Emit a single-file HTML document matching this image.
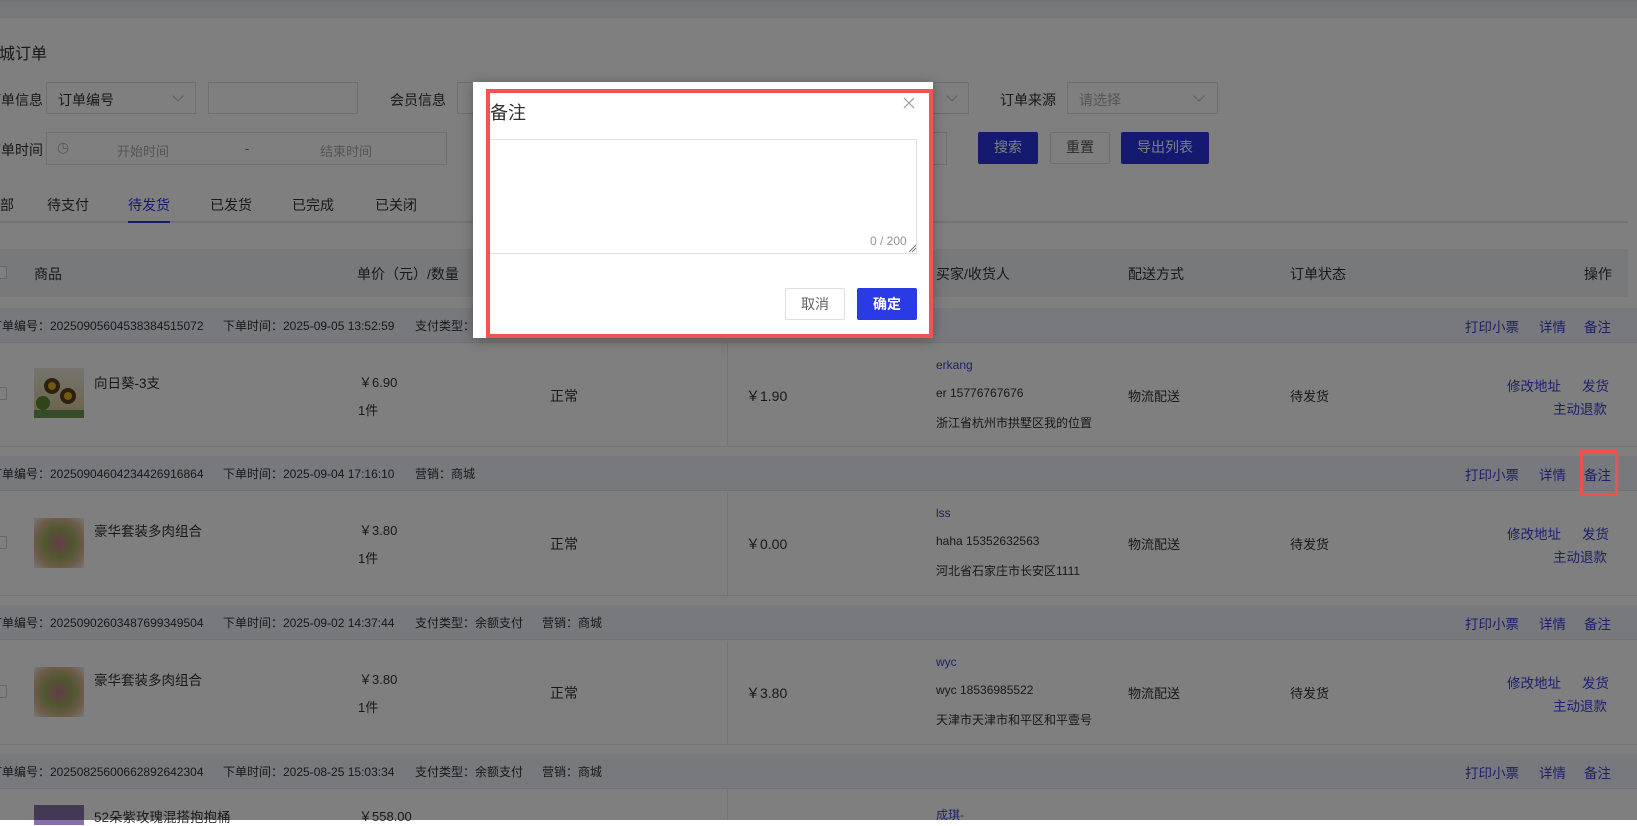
<!DOCTYPE html>
<html><head><meta charset="utf-8">
<style>
*{margin:0;padding:0;box-sizing:border-box}
body{width:1637px;height:820px;overflow:hidden;position:relative;background:#fff;font-family:"Liberation Sans","Noto Sans CJK SC",sans-serif;font-size:13px;color:#333}
.a{position:absolute;white-space:nowrap}
.topbar{left:0;top:0;width:1637px;height:18px;background:#eef0f3;border-top:2px solid #e4e6ea}
.box{position:absolute;border:1px solid #dcdfe6;background:#fff}
.ph{color:#aaa}
.btn{position:absolute;background:#2a35e0;color:#fff;text-align:center;line-height:31px;font-size:14px;border-radius:2px}
.btnw{position:absolute;background:#fff;border:1px solid #dcdfe6;color:#555;text-align:center;line-height:29px;font-size:14px;border-radius:2px}
.link{color:#3a40d8}
.ohead{position:absolute;left:0;width:1637px;height:35px;background:#f1f3f8;border-bottom:1px solid #e3e5ea;border-top:1px solid #eef0f4}
.prow{position:absolute;left:0;width:1637px;border-bottom:1px solid #e8e8e8}
.chk{position:absolute;left:-6px;width:13px;height:13px;border:1px solid #ccc;background:#fff;border-radius:2px}
.arr{position:absolute;width:8px;height:8px;border-right:1px solid #bbb;border-bottom:1px solid #bbb;transform:rotate(45deg)}
.overlay{position:absolute;left:0;top:0;width:1637px;height:820px;background:rgba(0,0,0,0.5)}
.oh{font-size:12px}
</style></head><body>
<div class="a topbar"></div>
<div class="a" style="left:-17px;top:40px;font-size:16px">商城订单</div>

<div class="a" style="left:-13px;top:90px;font-size:14px">订单信息</div>
<div class="box" style="left:46px;top:82px;width:150px;height:32px"><span class="a" style="left:11px;top:7px;font-size:14px">订单编号</span><div class="arr" style="left:127px;top:9px"></div></div>
<div class="box" style="left:208px;top:82px;width:150px;height:32px"></div>
<div class="a" style="left:390px;top:90px;font-size:14px">会员信息</div>
<div class="box" style="left:457px;top:82px;width:512px;height:32px"><div class="arr" style="left:490px;top:9px"></div></div>
<div class="a" style="left:1000px;top:90px;font-size:14px">订单来源</div>
<div class="box" style="left:1067px;top:82px;width:151px;height:32px"><span class="a ph" style="left:11px;top:7px;font-size:14px">请选择</span><div class="arr" style="left:127px;top:9px"></div></div>

<div class="a" style="left:-13px;top:140px;font-size:14px">下单时间</div>
<div class="box" style="left:46px;top:132px;width:401px;height:33px"><span class="a ph" style="left:10px;top:6px;font-size:14px">◷</span><span class="a ph" style="left:70px;top:8px;font-size:13px">开始时间</span><span class="a" style="left:198px;top:8px;color:#666">-</span><span class="a ph" style="left:273px;top:8px;font-size:13px">结束时间</span></div>
<div class="box" style="left:500px;top:132px;width:447px;height:33px"></div>
<div class="btn" style="left:978px;top:132px;width:60px;height:32px">搜索</div>
<div class="btnw" style="left:1050px;top:132px;width:60px;height:32px">重置</div>
<div class="btn" style="left:1121px;top:132px;width:88px;height:32px">导出列表</div>

<div class="a" style="left:-14px;top:195px;font-size:14px">全部</div>
<div class="a" style="left:47px;top:195px;font-size:14px">待支付</div>
<div class="a" style="left:128px;top:195px;font-size:14px;color:#2a35e0">待发货</div>
<div class="a" style="left:210px;top:195px;font-size:14px">已发货</div>
<div class="a" style="left:292px;top:195px;font-size:14px">已完成</div>
<div class="a" style="left:375px;top:195px;font-size:14px">已关闭</div>
<div class="a" style="left:0;top:221px;width:1628px;height:2px;background:#e4e6ea"></div>
<div class="a" style="left:128px;top:221px;width:42px;height:2px;background:#2a35e0"></div>

<div class="a" style="left:0;top:249px;width:1628px;height:48px;background:#f1f2f6"></div>
<div class="chk" style="top:266px"></div>
<div class="a" style="left:34px;top:264px;font-size:14px">商品</div>
<div class="a" style="left:357px;top:264px;font-size:14px">单价（元）/数量</div>
<div class="a" style="left:936px;top:264px;font-size:14px">买家/收货人</div>
<div class="a" style="left:1128px;top:264px;font-size:14px">配送方式</div>
<div class="a" style="left:1290px;top:264px;font-size:14px">订单状态</div>
<div class="a" style="left:1584px;top:264px;font-size:14px">操作</div>

<!-- order 1 -->
<div class="ohead" style="top:308px"></div>
<div class="a oh" style="left:-10px;top:317px">订单编号：20250905604538384515072</div>
<div class="a oh" style="left:223px;top:317px">下单时间：2025-09-05 13:52:59</div>
<div class="a oh" style="left:415px;top:317px">支付类型：余额支付</div>
<div class="a link" style="left:1465px;top:316px;font-size:13.5px">打印小票</div><div class="a link" style="left:1539px;top:316px;font-size:13.5px">详情</div><div class="a link" style="left:1584px;top:316px;font-size:13.5px">备注</div>
<div class="prow" style="top:343px;height:104px"></div>
<div class="a" style="left:727px;top:343px;width:1px;height:104px;background:#e8e8e8"></div>
<div class="chk" style="top:387px"></div>
<div class="a" style="left:34px;top:368px;width:50px;height:50px;background:linear-gradient(#eaeadc,#d8c890)"><div class="a" style="left:10px;top:10px;width:16px;height:16px;border-radius:50%;background:#e0b020;border:4px solid #5a4020"></div><div class="a" style="left:26px;top:20px;width:16px;height:16px;border-radius:50%;background:#e0b020;border:4px solid #5a4020"></div><div class="a" style="left:2px;top:28px;width:14px;height:14px;background:#5a8a30;border-radius:50%"></div><div class="a" style="left:0;top:42px;width:50px;height:8px;background:#6a9a50"></div></div>
<div class="a" style="left:94px;top:372px;font-size:13.5px">向日葵-3支</div>
<div class="a" style="left:359px;top:372px">￥6.90</div>
<div class="a" style="left:358px;top:400px">1件</div>
<div class="a" style="left:550px;top:386px;font-size:14px">正常</div>
<div class="a" style="left:746px;top:386px;font-size:14px">￥1.90</div>
<div class="a link" style="left:936px;top:358px;font-size:12px">erkang</div>
<div class="a" style="left:936px;top:386px;font-size:12px">er 15776767676</div>
<div class="a" style="left:936px;top:414px;font-size:12px">浙江省杭州市拱墅区我的位置</div>
<div class="a" style="left:1128px;top:386px">物流配送</div>
<div class="a" style="left:1290px;top:386px">待发货</div>
<div class="a link" style="left:1507px;top:375px;font-size:13.5px">修改地址</div><div class="a link" style="left:1582px;top:375px;font-size:13.5px">发货</div>
<div class="a link" style="left:1553px;top:398px;font-size:13.5px">主动退款</div>

<!-- order 2 -->
<div class="ohead" style="top:456px"></div>
<div class="a oh" style="left:-10px;top:465px">订单编号：20250904604234426916864</div>
<div class="a oh" style="left:223px;top:465px">下单时间：2025-09-04 17:16:10</div>
<div class="a oh" style="left:415px;top:465px">营销：商城</div>
<div class="a link" style="left:1465px;top:464px;font-size:13.5px">打印小票</div><div class="a link" style="left:1539px;top:464px;font-size:13.5px">详情</div><div class="a link" style="left:1584px;top:464px;font-size:13.5px">备注</div>
<div class="prow" style="top:492px;height:104px"></div>
<div class="a" style="left:727px;top:492px;width:1px;height:104px;background:#e8e8e8"></div>
<div class="chk" style="top:536px"></div>
<div class="a" style="left:34px;top:518px;width:50px;height:50px;background:radial-gradient(circle at 50% 50%,#c87890 0,#a0b060 40%,#d8b890 70%,#eee 100%)"></div>
<div class="a" style="left:94px;top:520px;font-size:13.5px">豪华套装多肉组合</div>
<div class="a" style="left:359px;top:520px">￥3.80</div>
<div class="a" style="left:358px;top:548px">1件</div>
<div class="a" style="left:550px;top:534px;font-size:14px">正常</div>
<div class="a" style="left:746px;top:534px;font-size:14px">￥0.00</div>
<div class="a link" style="left:936px;top:506px;font-size:12px">lss</div>
<div class="a" style="left:936px;top:534px;font-size:12px">haha 15352632563</div>
<div class="a" style="left:936px;top:562px;font-size:12px">河北省石家庄市长安区1111</div>
<div class="a" style="left:1128px;top:534px">物流配送</div>
<div class="a" style="left:1290px;top:534px">待发货</div>
<div class="a link" style="left:1507px;top:523px;font-size:13.5px">修改地址</div><div class="a link" style="left:1582px;top:523px;font-size:13.5px">发货</div>
<div class="a link" style="left:1553px;top:546px;font-size:13.5px">主动退款</div>

<!-- order 3 -->
<div class="ohead" style="top:605px"></div>
<div class="a oh" style="left:-10px;top:614px">订单编号：20250902603487699349504</div>
<div class="a oh" style="left:223px;top:614px">下单时间：2025-09-02 14:37:44</div>
<div class="a oh" style="left:415px;top:614px">支付类型：余额支付</div>
<div class="a oh" style="left:542px;top:614px">营销：商城</div>
<div class="a link" style="left:1465px;top:613px;font-size:13.5px">打印小票</div><div class="a link" style="left:1539px;top:613px;font-size:13.5px">详情</div><div class="a link" style="left:1584px;top:613px;font-size:13.5px">备注</div>
<div class="prow" style="top:641px;height:104px"></div>
<div class="a" style="left:727px;top:641px;width:1px;height:104px;background:#e8e8e8"></div>
<div class="chk" style="top:685px"></div>
<div class="a" style="left:34px;top:667px;width:50px;height:50px;background:radial-gradient(circle at 50% 50%,#c87890 0,#a0b060 40%,#d8b890 70%,#eee 100%)"></div>
<div class="a" style="left:94px;top:669px;font-size:13.5px">豪华套装多肉组合</div>
<div class="a" style="left:359px;top:669px">￥3.80</div>
<div class="a" style="left:358px;top:697px">1件</div>
<div class="a" style="left:550px;top:683px;font-size:14px">正常</div>
<div class="a" style="left:746px;top:683px;font-size:14px">￥3.80</div>
<div class="a link" style="left:936px;top:655px;font-size:12px">wyc</div>
<div class="a" style="left:936px;top:683px;font-size:12px">wyc 18536985522</div>
<div class="a" style="left:936px;top:711px;font-size:12px">天津市天津市和平区和平壹号</div>
<div class="a" style="left:1128px;top:683px">物流配送</div>
<div class="a" style="left:1290px;top:683px">待发货</div>
<div class="a link" style="left:1507px;top:672px;font-size:13.5px">修改地址</div><div class="a link" style="left:1582px;top:672px;font-size:13.5px">发货</div>
<div class="a link" style="left:1553px;top:695px;font-size:13.5px">主动退款</div>

<!-- order 4 -->
<div class="ohead" style="top:754px"></div>
<div class="a oh" style="left:-10px;top:763px">订单编号：20250825600662892642304</div>
<div class="a oh" style="left:223px;top:763px">下单时间：2025-08-25 15:03:34</div>
<div class="a oh" style="left:415px;top:763px">支付类型：余额支付</div>
<div class="a oh" style="left:542px;top:763px">营销：商城</div>
<div class="a link" style="left:1465px;top:762px;font-size:13.5px">打印小票</div><div class="a link" style="left:1539px;top:762px;font-size:13.5px">详情</div><div class="a link" style="left:1584px;top:762px;font-size:13.5px">备注</div>
<div class="a" style="left:727px;top:790px;width:1px;height:30px;background:#e8e8e8"></div>
<div class="a" style="left:34px;top:805px;width:50px;height:20px;background:#8a70a8"></div>
<div class="a" style="left:94px;top:806px;font-size:13.5px">52朵紫玫瑰混搭抱抱桶</div>
<div class="a" style="left:359px;top:806px">￥558.00</div>
<div class="a link" style="left:936px;top:806px;font-size:12px">成琪-</div>

<div class="overlay"></div>
<div class="a" style="left:1580px;top:450px;width:38px;height:46px;border:3px solid #f05050"></div>

<!-- modal -->
<div class="a" style="left:473px;top:82px;width:460px;height:256px;background:#fff;box-shadow:0 2px 12px rgba(0,0,0,.3)"></div>
<div class="a" style="left:486px;top:89px;width:447px;height:249px;border:4px solid #f55252"></div>
<div class="a" style="left:490px;top:99px;font-size:18px;color:#303133">备注</div>
<svg class="a" style="left:903px;top:97px" width="12" height="12" viewBox="0 0 12 12"><path d="M1 1L11 11M11 1L1 11" stroke="#999" stroke-width="1.2"/></svg>
<div class="a" style="left:490px;top:139px;width:427px;height:115px;border:1px solid #dcdfe6;border-left:none"></div>
<div class="a" style="left:870px;top:234px;font-size:12px;color:#909399">0 / 200</div>
<svg class="a" style="left:908px;top:244px" width="8" height="8"><path d="M1 8L8 1M4 8L8 4" stroke="#777" stroke-width="1"/></svg>
<div class="a" style="left:785px;top:288px;width:60px;height:32px;border:1px solid #dcdfe6;border-radius:2px;text-align:center;line-height:30px;font-size:14px;color:#606266">取消</div>
<div class="a" style="left:857px;top:288px;width:60px;height:32px;background:#2a3be6;border-radius:2px;text-align:center;line-height:32px;font-size:14px;color:#fff;font-weight:bold">确定</div>
</body></html>
